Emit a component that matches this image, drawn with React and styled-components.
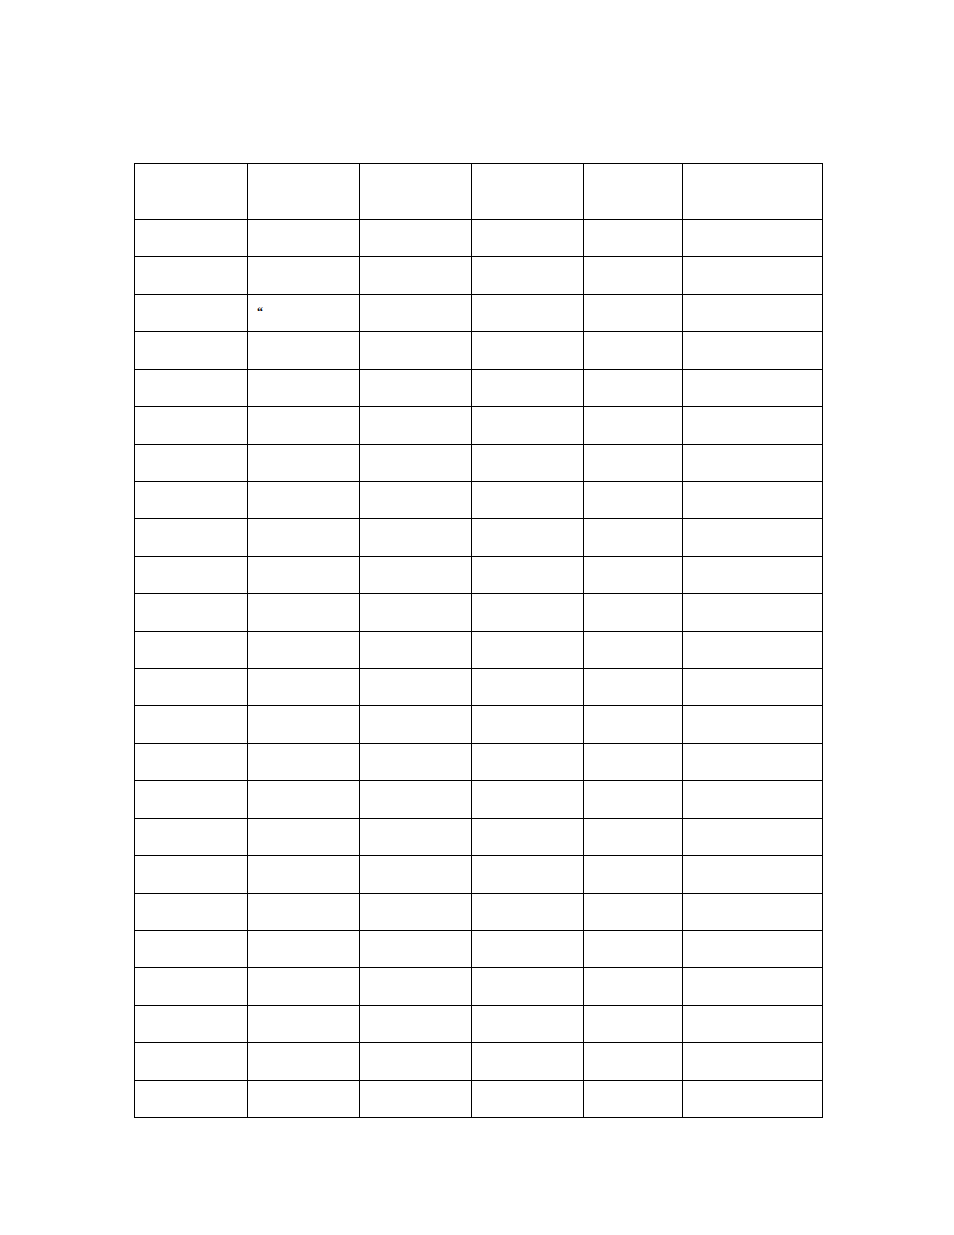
import React from "react";
import styled, { createGlobalStyle } from "styled-components";

const Global = createGlobalStyle`
  html, body { margin: 0; padding: 0; background: #ffffff; }
  body { font-family: "Liberation Serif", "Times New Roman", serif; color: #000; }
`;

const Page = styled.div`
  width: 954px;
  height: 1235px;
  padding: 163px 0 0 134px;
  box-sizing: border-box;
`;

const Grid = styled.div`
  display: grid;
  grid-template-columns: 113px 112px 112px 112px 99px 140px;
  grid-template-rows: 56px repeat(24, 1fr);
  width: 689px;
  height: 955px;
  box-sizing: border-box;
  border-left: 1px solid #000;
  border-top: 1px solid #000;
`;

const Cell = styled.div`
  border-right: 1px solid #000;
  border-bottom: 1px solid #000;
  font-size: 12px;
  font-weight: bold;
  line-height: 1;
  color: #000;
  padding: ${(p) => (p.$mark ? "11px 0 0 9px" : "0")};
`;

const COLS = 6;
const ROWS = 25;

export default function App() {
  const cells = [];
  for (let r = 0; r < ROWS; r++) {
    for (let c = 0; c < COLS; c++) {
      const mark = r === 3 && c === 1;
      cells.push(
        <Cell key={`${r}-${c}`} $mark={mark}>
          {mark ? "\u201C" : null}
        </Cell>
      );
    }
  }
  return (
    <>
      <Global />
      <Page>
        <Grid>{cells}</Grid>
      </Page>
    </>
  );
}
